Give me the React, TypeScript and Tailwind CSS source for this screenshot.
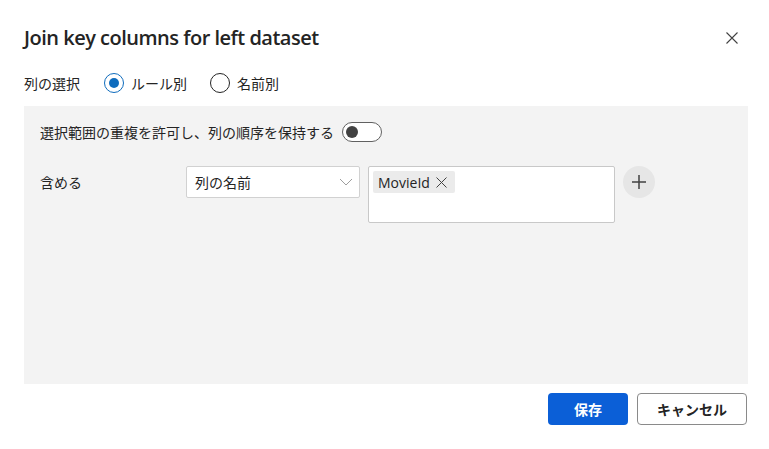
import React, { useState } from 'react';

const font = "font-['Segoe_UI','Open_Sans','Noto_Sans_CJK_JP',sans-serif]";

const Radio: React.FC<{ checked: boolean; label: string; onClick: () => void }> = ({ checked, label, onClick }) => (
  <button type="button" onClick={onClick} className="flex items-center gap-[7px] text-[14px] text-[#242424]">
    <span
      className={`flex h-5 w-5 items-center justify-center rounded-full border ${
        checked ? 'border-[#0f6cbd]' : 'border-[#242424]'
      }`}
    >
      {checked && <span className="h-[10px] w-[10px] rounded-full bg-[#0f6cbd]" />}
    </span>
    <span>{label}</span>
  </button>
);

const App: React.FC = () => {
  const [mode, setMode] = useState('rule');
  const [keepOrder, setKeepOrder] = useState(false);

  return (
    <div className={`h-[449px] w-[769px] bg-white ${font} text-[#242424]`}>
      <div className="flex items-start justify-between pl-6 pr-[31px] pt-[24px]">
        <h1 className="text-[20px] font-semibold leading-7 tracking-[-0.5px]">Join key columns for left dataset</h1>
        <button type="button" className="mt-[8px]">
          <svg width="12" height="12" viewBox="0 0 12 12" stroke="#424242" strokeWidth="1.1">
            <path d="M0.5 0.5 L11.5 11.5 M11.5 0.5 L0.5 11.5" />
          </svg>
        </button>
      </div>

      <div className="mt-[21px] flex h-5 items-center pl-6 text-[14px]">
        <span className="w-[80px]">列の選択</span>
        <div className="flex items-center gap-[23px]">
          <Radio checked={mode === 'rule'} label="ルール別" onClick={() => setMode('rule')} />
          <Radio checked={mode === 'name'} label="名前別" onClick={() => setMode('name')} />
        </div>
      </div>

      <div className="mx-6 mt-[13px] h-[278px] w-[724px] bg-[#f3f3f3] px-4 pt-4 text-[14px]">
        <div className="flex h-5 items-center gap-2">
          <span>選択範囲の重複を許可し、列の順序を保持する</span>
          <button
            type="button"
            onClick={() => setKeepOrder(!keepOrder)}
            className="flex h-5 w-10 items-center rounded-full border border-[#616161] bg-white px-[3px]"
          >
            <span className="h-3 w-3 rounded-full bg-[#424242]" />
          </button>
        </div>

        <div className="mt-6 flex items-start">
          <span className="flex h-8 w-[146px] items-center">含める</span>
          <div className="flex h-8 w-[174px] items-center justify-between rounded-[2px] border border-[#d1d1d1] bg-white pl-2 pr-[6px]">
            <span>列の名前</span>
            <svg width="14" height="8" viewBox="0 0 14 8" fill="none" stroke="#9e9e9e" strokeWidth="1">
              <path d="M1 1 L7 7 L13 1" />
            </svg>
          </div>
          <div className="ml-2 h-[57px] w-[247px] rounded-[2px] border border-[#c8c8c8] bg-white px-1 pt-[4px]">
            <div className="inline-flex h-[22px] items-center gap-[6px] rounded-[2px] bg-[#ebebeb] pl-[5px] pr-[8px]">
              <span>MovieId</span>
              <svg width="11" height="11" viewBox="0 0 11 11" stroke="#424242" strokeWidth="1">
                <path d="M0.5 0.5 L10.5 10.5 M10.5 0.5 L0.5 10.5" />
              </svg>
            </div>
          </div>
          <button type="button" className="ml-2 flex h-8 w-8 items-center justify-center rounded-full bg-[#e6e6e6]">
            <svg width="16" height="16" viewBox="0 0 16 16" stroke="#424242" strokeWidth="1.5">
              <path d="M8 1 V15 M1 8 H15" />
            </svg>
          </button>
        </div>
      </div>

      <div className="mr-[22px] mt-[9px] flex justify-end gap-[9px]">
        <button type="button" className="h-8 w-20 rounded bg-[#0b5fd7] text-[14px] font-bold text-white">
          保存
        </button>
        <button type="button" className="h-8 w-[110px] rounded border border-[#8a8a8a] bg-white text-[14px] font-bold text-[#242424]">
          キャンセル
        </button>
      </div>
    </div>
  );
};

export default App;
